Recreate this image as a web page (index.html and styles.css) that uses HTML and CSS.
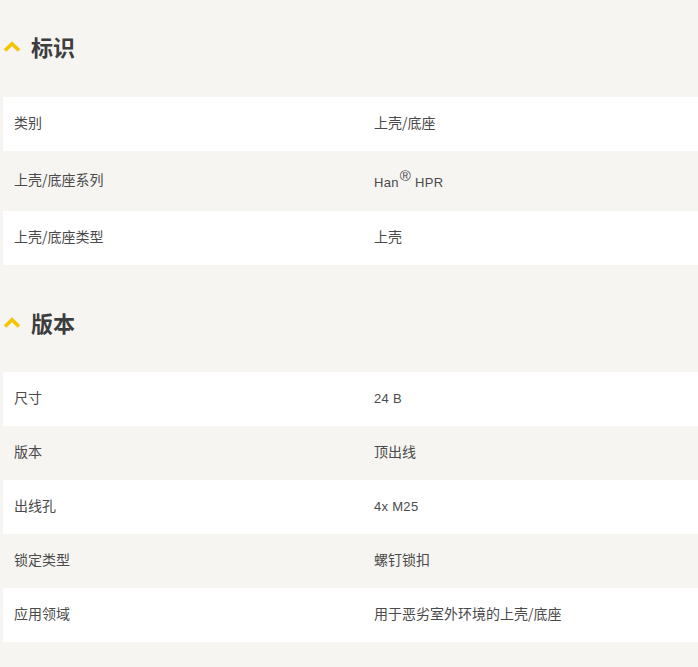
FILE: index.html
```html
<!DOCTYPE html>
<html lang="zh">
<head>
<meta charset="utf-8">
<title>标识</title>
<link rel="stylesheet" href="styles.css">
</head>
<body>
<section class="section first">
  <h2 class="heading">
    <svg class="chev" width="18" height="11" viewBox="0 0 18 11"><path d="M2 9.5 L9 2.8 L16 9.5" fill="none" stroke="#f5c400" stroke-width="3.6"/></svg>
    <span>标识</span>
  </h2>
  <div class="table">
    <div class="row"><div class="cell">类别</div><div class="cell">上壳/底座</div></div>
    <div class="row alt tall"><div class="cell">上壳/底座系列</div><div class="cell latin low"><span>Han<sup class="reg">®</sup> HPR</span></div></div>
    <div class="row"><div class="cell">上壳/底座类型</div><div class="cell">上壳</div></div>
  </div>
</section>
<section class="section">
  <h2 class="heading">
    <svg class="chev" width="18" height="11" viewBox="0 0 18 11"><path d="M2 9.5 L9 2.8 L16 9.5" fill="none" stroke="#f5c400" stroke-width="3.6"/></svg>
    <span>版本</span>
  </h2>
  <div class="table">
    <div class="row"><div class="cell">尺寸</div><div class="cell latin">24 B</div></div>
    <div class="row alt"><div class="cell">版本</div><div class="cell">顶出线</div></div>
    <div class="row"><div class="cell">出线孔</div><div class="cell latin">4x M25</div></div>
    <div class="row alt"><div class="cell">锁定类型</div><div class="cell">螺钉锁扣</div></div>
    <div class="row"><div class="cell">应用领域</div><div class="cell">用于恶劣室外环境的上壳/底座</div></div>
  </div>
</section>
</body>
</html>
```
FILE: styles.css
```css
html, body {
  margin: 0;
  padding: 0;
}
body {
  background: #f6f5f2;
  font-family: "Liberation Sans", "Noto Sans CJK SC", sans-serif;
  color: #4a4a4a;
  overflow: hidden;
}
.section {
  padding-top: 37px;
}
.section.first {
  padding-top: 26px;
}
.heading {
  display: flex;
  align-items: center;
  gap: 10px;
  height: 44px;
  margin: 0 0 27px 0;
  padding-left: 3px;
  padding-bottom: 4px;
  box-sizing: border-box;
  font-family: "Noto Sans CJK SC", sans-serif;
  font-size: 22px;
  font-weight: 700;
  color: #3d3d3d;
}
.section:not(.first) .heading {
  margin-bottom: 26px;
}
.chev {
  display: block;
  margin-top: 1px;
}
.table {
  margin-left: 3px;
  width: 720px;
}
.row {
  display: grid;
  grid-template-columns: 360px 360px;
  height: 54px;
  background: #ffffff;
}
.row.alt {
  background: transparent;
}
.row.tall {
  height: 60px;
}
.cell {
  display: flex;
  align-items: center;
  padding-left: 11px;
  padding-bottom: 4px;
  box-sizing: border-box;
  font-family: "Noto Sans CJK SC", sans-serif;
  font-size: 14px;
  color: #4a4a4a;
}
.cell.latin {
  font-family: "Liberation Sans", "Noto Sans CJK SC", sans-serif;
  font-size: 13px;
  letter-spacing: 0.3px;
  padding-bottom: 2px;
}
.cell.low {
  padding-top: 3px;
  padding-bottom: 0;
}
.reg {
  font-size: 15px;
  line-height: 0;
  vertical-align: 0;
  position: relative;
  top: -6px;
  margin-left: 1px;
}
```
